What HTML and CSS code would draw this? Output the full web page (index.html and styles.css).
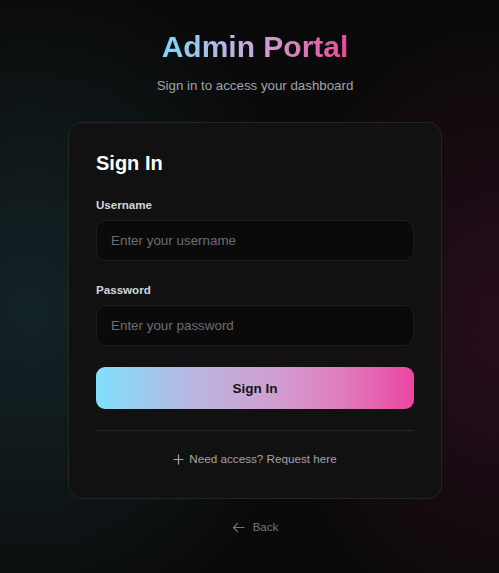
FILE: index.html
```html
<!DOCTYPE html>
<html lang="en">
<head>
<meta charset="utf-8">
<title>Admin Portal</title>
<link rel="stylesheet" href="styles.css">
</head>
<body>
<main class="page">
  <h1 class="title">Admin Portal</h1>
  <p class="subtitle">Sign in to access your dashboard</p>
  <section class="card">
    <h2 class="card-title">Sign In</h2>
    <form class="form">
      <div class="field">
        <label class="label" for="username">Username</label>
        <input class="input" id="username" type="text" placeholder="Enter your username">
      </div>
      <div class="field">
        <label class="label" for="password">Password</label>
        <input class="input" id="password" type="password" placeholder="Enter your password">
      </div>
      <button class="btn" type="button">Sign In</button>
    </form>
    <div class="divider"></div>
    <a class="request" href="#">
      <svg class="icon-plus" viewBox="0 0 12 12" width="11" height="11" aria-hidden="true"><path d="M6 1v10M1 6h10" stroke="currentColor" stroke-width="1.3" stroke-linecap="round" fill="none"/></svg>
      <span>Need access? Request here</span>
    </a>
  </section>
  <a class="back" href="#">
    <svg class="icon-arrow" viewBox="0 0 14 12" width="13" height="11" aria-hidden="true"><path d="M13 6H1.5M6 1.5L1.5 6L6 10.5" stroke="currentColor" stroke-width="1.3" stroke-linecap="round" stroke-linejoin="round" fill="none"/></svg>
    <span>Back</span>
  </a>
</main>
</body>
</html>
```

FILE: styles.css
```css
* { box-sizing: border-box; }
html, body { margin: 0; padding: 0; }
body {
  min-height: 100vh;
  padding-left: 11px;
  font-family: "Liberation Sans", Arial, sans-serif;
  background-color: #0a0a0a;
  background-image:
    radial-gradient(ellipse 290px 340px at 30px 310px, rgba(26, 52, 58, 0.6), rgba(26, 52, 58, 0) 100%),
    radial-gradient(ellipse 230px 320px at 499px 330px, rgba(58, 14, 38, 0.6), rgba(58, 14, 38, 0) 100%);
  color: #fff;
}
.page {
  width: 374px;
  margin: 0 auto;
  padding-top: 29px;
  display: flex;
  flex-direction: column;
  align-items: stretch;
}
.title {
  margin: 0;
  font-size: 30px;
  line-height: 36px;
  font-weight: 700;
  text-align: center;
  background: linear-gradient(90deg, #7dd8fa 0%, #c9a9dc 50%, #ec4899 100%);
  -webkit-background-clip: text;
  background-clip: text;
  color: transparent;
  align-self: center;
}
.subtitle {
  margin: 11px 0 0;
  font-size: 13.3px;
  line-height: 20px;
  color: #a3a3aa;
  text-align: center;
}
.card {
  margin-top: 26px;
  background: #111111;
  border: 1px solid #252525;
  border-radius: 14px;
  padding: 26px 27px 31px;
}
.card-title {
  margin: 0 0 20px;
  font-size: 20px;
  line-height: 28px;
  font-weight: 700;
  color: #ffffff;
}
.form { display: flex; flex-direction: column; }
.field {
  display: flex;
  flex-direction: column;
  gap: 7px;
  margin-bottom: 21px;
}
.label {
  font-size: 11.6px;
  line-height: 16px;
  font-weight: 700;
  color: #d6d6da;
}
.input {
  height: 41px;
  width: 100%;
  background: #0a0a0a;
  border: 1px solid #1e1e1e;
  border-radius: 10px;
  padding: 0 14px;
  font-family: inherit;
  font-size: 13.4px;
  color: #fff;
  outline: none;
}
.input::placeholder { color: #6d6d73; }
.btn {
  height: 42px;
  border: none;
  border-radius: 9px;
  background: linear-gradient(90deg, #80e0fb 0%, #b8b6e0 30%, #cfa0d2 55%, #e07bbc 78%, #ec45a0 100%);
  font-family: inherit;
  font-size: 13.5px;
  font-weight: 700;
  color: #141414;
  cursor: pointer;
}
.divider {
  height: 1px;
  background: #262626;
  margin-top: 21px;
}
.request {
  margin-top: 20px;
  display: flex;
  align-items: center;
  justify-content: center;
  gap: 5px;
  font-size: 11.7px;
  line-height: 16px;
  color: #a3a3aa;
  text-decoration: none;
}
.icon-plus { display: block; }
.back {
  margin-top: 20px;
  align-self: center;
  display: flex;
  align-items: center;
  gap: 8px;
  font-size: 11.5px;
  line-height: 16px;
  color: #75757c;
  text-decoration: none;
}
.icon-arrow { display: block; }
```
